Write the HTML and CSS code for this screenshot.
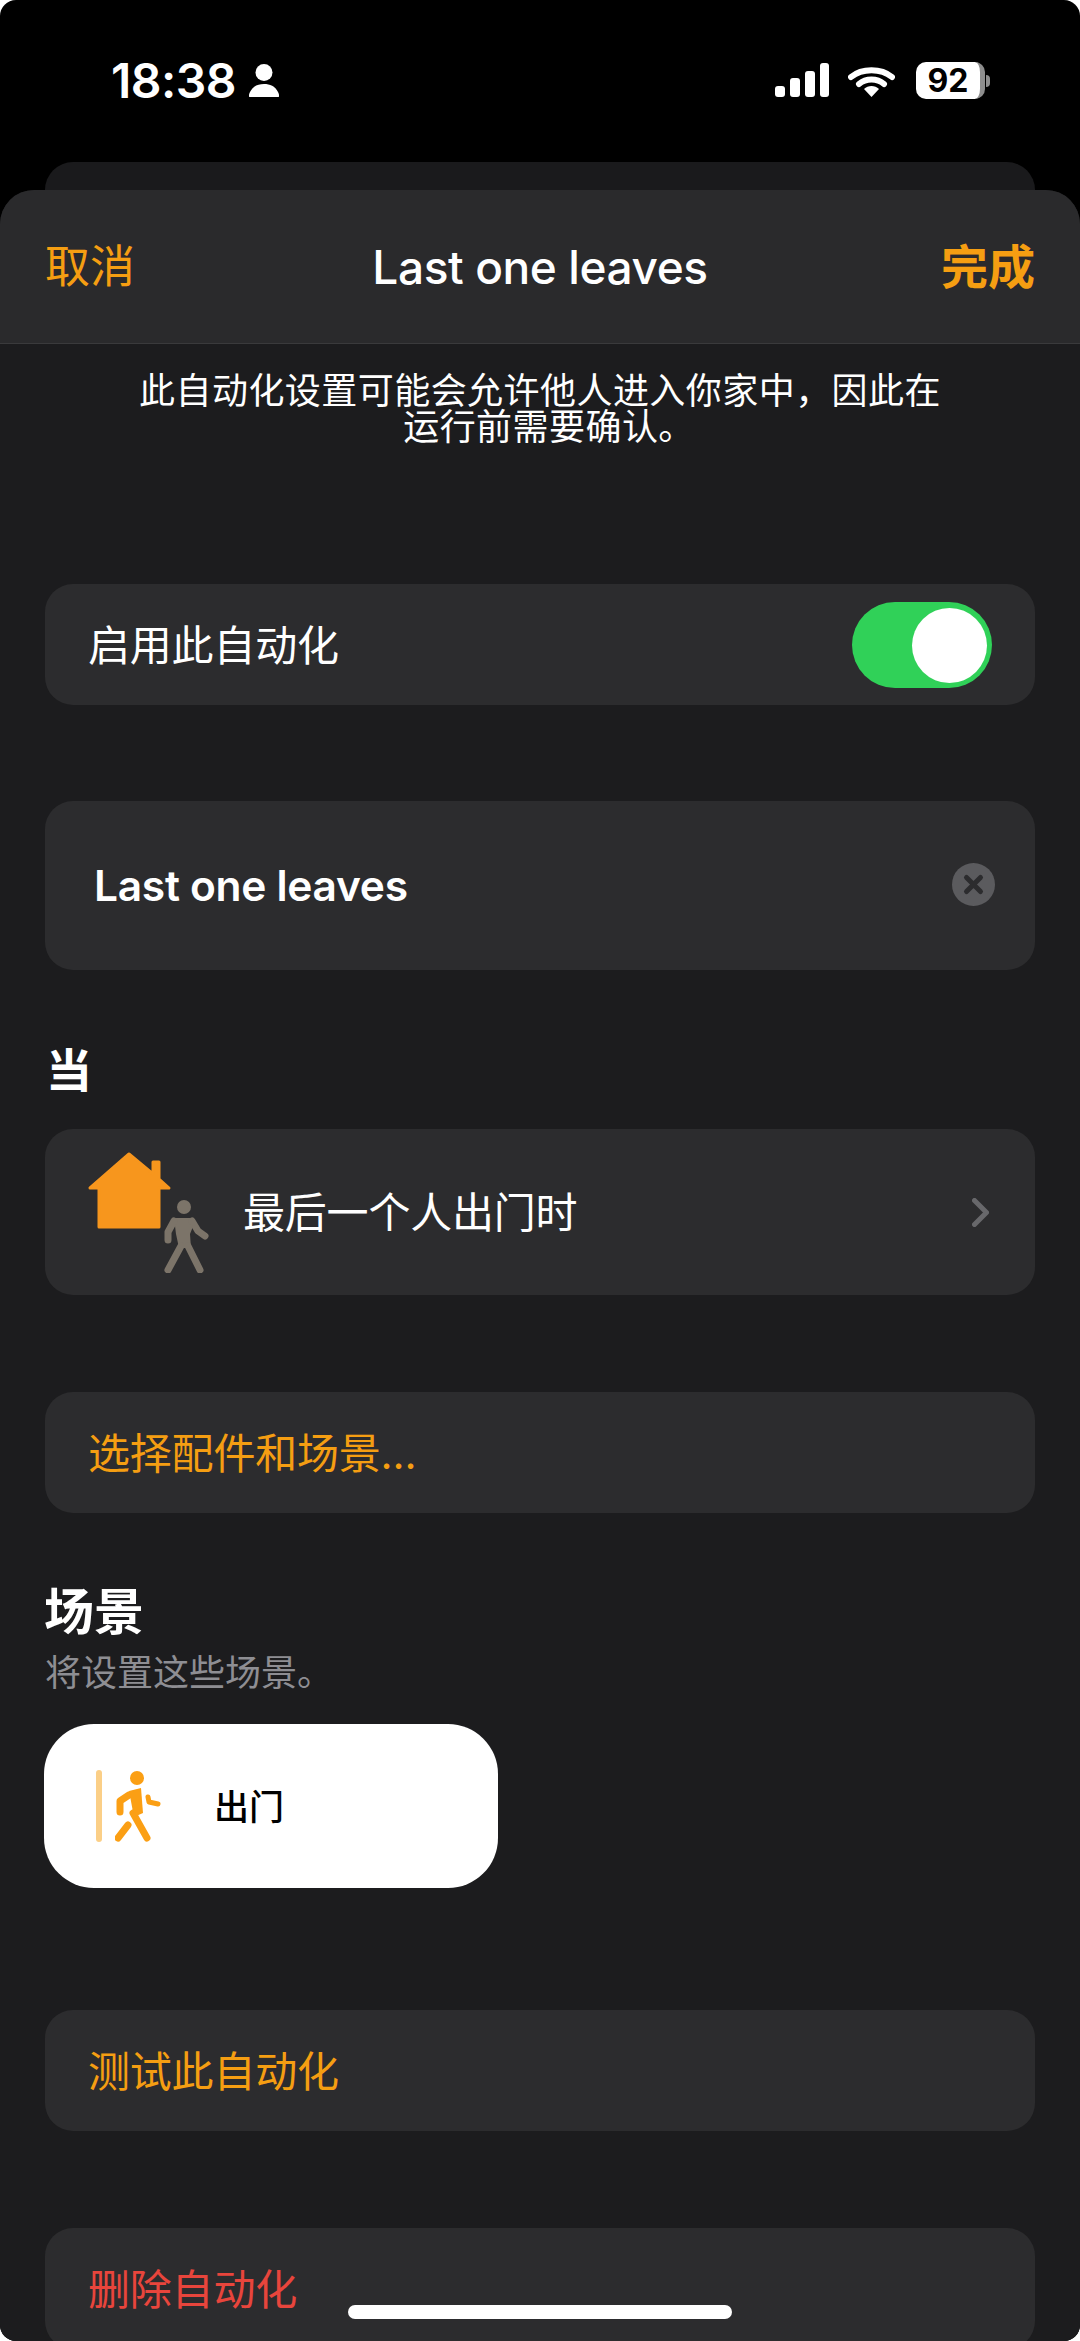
FILE: index.html
```html
<!DOCTYPE html>
<html lang="zh-CN">
<head>
    <meta charset="UTF-8" />
    <meta name="viewport" content="width=device-width, initial-scale=1.0" />
    <title>Last one leaves</title>
    <link rel="stylesheet" href="styles.css">
</head>
<body>
<div class="screen">

    <div class="status-bar">
        <div class="status-left">
            <span class="clock">18:38</span>
            <svg class="status-person" viewBox="0 0 30 33">
                <circle cx="15" cy="8.5" r="8.5" fill="#fff"/>
                <path d="M1 33 C-1 33 0 30 1 28 C4 22 9 20 15 20 C21 20 26 22 29 28 C30 30 31 33 29 33 Z" fill="#fff"/>
            </svg>
        </div>
        <div class="status-right">
            <svg class="signal" viewBox="0 0 54 34">
                <rect x="0" y="23" width="10" height="11" rx="3" fill="#fff"/>
                <rect x="15" y="15" width="10" height="19" rx="3" fill="#fff"/>
                <rect x="30" y="8" width="10" height="26" rx="3" fill="#fff"/>
                <rect x="45" y="0" width="9" height="34" rx="3" fill="#fff"/>
            </svg>
            <svg class="wifi" viewBox="0 0 47 30">
                <path d="M3 10 C14 1 33 1 44 10" fill="none" stroke="#fff" stroke-width="6" stroke-linecap="round"/>
                <path d="M11 17 C18 11 29 11 36 17" fill="none" stroke="#fff" stroke-width="6" stroke-linecap="round"/>
                <path d="M16 22 C20 18 27 18 31 22 L23.5 30 Z" fill="#fff"/>
            </svg>
            <div class="battery">
                <div class="battery-body">92</div>
                <div class="battery-nub"></div>
            </div>
        </div>
    </div>

    <div class="back-card"></div>

    <div class="sheet">
        <div class="sheet-nav">
            <span class="nav-btn">取消</span>
            <span class="nav-title">Last one leaves</span>
            <span class="nav-btn nav-done">完成</span>
        </div>

        <p class="notice">此自动化设置可能会允许他人进入你家中，因此在<br>运行前需要确认<span class="hang">。</span></p>

        <div class="row row-toggle">
            <span>启用此自动化</span>
            <div class="switch"><div class="switch-knob"></div></div>
        </div>

        <div class="row row-name">
            <span class="name-text">Last one leaves</span>
            <svg class="clear-btn" viewBox="0 0 43 43">
                <circle cx="21.5" cy="21.5" r="21.5" fill="#5b5b5e"/>
                <path d="M14.5 14.5 L28.5 28.5 M28.5 14.5 L14.5 28.5" stroke="#2c2c2e" stroke-width="5" stroke-linecap="round"/>
            </svg>
        </div>

        <h3 class="heading heading-when">当</h3>

        <div class="row row-trigger">
            <svg class="trigger-icon" viewBox="0 0 121 121">
                <path d="M41 2 L65 22 V10 H71 V27 L81 36 H71 V75 H11 V36 H2 Z" fill="#f7961d" stroke="#f7961d" stroke-width="3" stroke-linejoin="round"/>
                <g transform="translate(75 48)">
                    <circle cx="21" cy="7" r="7" fill="#7c7469"/>
                    <path d="M11 18 H27 L31 24 L27 34 L28 48 H16 L13 34 Z" fill="#7c7469"/>
                    <path d="M11 21 L5 32 L5 40 M29 21 L35 31 L42 36 M18 46 L5 70 M25 46 L37 70" fill="none" stroke="#7c7469" stroke-width="7" stroke-linecap="round" stroke-linejoin="round"/>
                </g>
            </svg>
            <span class="trigger-text">最后一个人出门时</span>
            <svg class="chevron" viewBox="0 0 17 29">
                <path d="M2.5 2.5 L14.5 14.5 L2.5 26.5" fill="none" stroke="#68686b" stroke-width="5" stroke-linecap="round" stroke-linejoin="round"/>
            </svg>
        </div>

        <div class="row row-accessories orange">选择配件和场景...</div>

        <h3 class="heading heading-scenes">场景</h3>
        <p class="subhead">将设置这些场景。</p>

        <div class="scene-card">
            <div class="scene-bar"></div>
            <svg class="scene-icon" viewBox="0 0 46 71">
                <circle cx="22" cy="7" r="7" fill="#fb9f14"/>
                <path d="M14 24 L5 30 L5 41 M13 54 L3 67 M18 42 L32 67" fill="none" stroke="#fb9f14" stroke-width="7" stroke-linecap="round" stroke-linejoin="round"/>
                <path d="M33 26 L34 31 L43 33" fill="none" stroke="#fb9f14" stroke-width="5" stroke-linecap="round" stroke-linejoin="round"/>
                <path d="M14 20 L26 17 L28 42 L19 46 Z" fill="#fb9f14"/>
            </svg>
            <span class="scene-name">出门</span>
        </div>

        <div class="row row-test orange">测试此自动化</div>
        <div class="row row-delete red">删除自动化</div>
    </div>

    <div class="home-bar"></div>
</div>
</body>
</html>
```

FILE: styles.css
```css
html, body { margin: 0; padding: 0; background: #fff; }
body { font-family: "Inter", "Noto Sans CJK SC", sans-serif; color: #fff; }
.screen {
    position: relative; width: 1080px; height: 2341px; overflow: hidden;
    background: #000; border-radius: 16px;
}

/* status bar */
.status-bar {
    height: 162px; box-sizing: border-box; padding: 62px 90px 0 111px;
    display: flex; justify-content: space-between; align-items: flex-start;
}
.status-left { display: flex; align-items: center; gap: 13px; height: 37px; }
.clock { font-size: 48px; font-weight: 600; line-height: 37px; letter-spacing: -0.5px; }
.status-person { width: 30px; height: 33px; }
.status-right { display: flex; align-items: flex-start; }
.signal { width: 54px; height: 34px; margin-top: 1px; }
.wifi { width: 47px; height: 30px; margin: 5px 21px 0 19px; }
.battery { display: flex; align-items: center; height: 37px; }
.battery-body {
    width: 69px; height: 37px; background: #fff; border-radius: 10px;
    border-right: 5px solid #8d8d8d; box-sizing: border-box;
    color: #000; font-size: 32px; font-weight: 700; line-height: 37px; text-align: center;
}
.battery-nub {
    width: 4px; height: 12px; margin-left: 1px; background: #8d8d8d;
    border-radius: 0 6px 6px 0;
}

.back-card {
    height: 28px; margin: 0 45px; background: #1a1a1c;
    border-radius: 30px 30px 0 0;
}

/* sheet */
.sheet {
    height: 2151px; background: #1c1c1e; border-radius: 34px 34px 0 0;
    overflow: hidden; display: flow-root;
}
.sheet-nav {
    height: 153px; background: #2a2a2c; border-bottom: 1px solid #3a3a3c;
    padding: 0 45px; display: flex; justify-content: space-between; align-items: center;
}
.nav-btn { font-size: 45px; color: #f59e12; line-height: 1; }
.nav-done { font-size: 47px; font-weight: 700; }
.nav-title { font-size: 46px; font-weight: 500; letter-spacing: -0.4px; margin-left: 4px; }
.notice {
    margin: 30px 0 0; text-align: center; font-size: 36px; line-height: 35.5px;
    letter-spacing: 0.45px; height: 210px;
}
.hang { margin-right: -18px; }

.row {
    margin: 0 45px; background: #2c2c2e; border-radius: 28px;
    box-sizing: border-box; height: 121px; padding: 0 43px;
    display: flex; align-items: center; justify-content: space-between;
    font-size: 42px; letter-spacing: -0.2px;
}
.orange { color: #f59e12; }
.red { color: #e8453c; }

.row-toggle span { margin-bottom: 4px; }
.switch {
    width: 140px; height: 86px; border-radius: 43px; background: #30d158;
    box-sizing: border-box; padding: 6px 5px 0 0;
    display: flex; justify-content: flex-end;
}
.switch-knob { width: 75px; height: 75px; border-radius: 50%; background: #fff; }

.row-name { margin-top: 96px; height: 169px; padding: 0 40px 0 49px; }
.name-text { font-size: 42.5px; font-weight: 600; letter-spacing: -0.3px; }
.clear-btn { width: 43px; height: 43px; margin-bottom: 2px; }

.heading { margin: 0 45px; font-weight: 700; line-height: 1; }
.heading-when { font-size: 46px; margin: 77px 46px 36px; height: 46px; line-height: 46px; }

.row-trigger { height: 166px; padding: 0 46px 0 43px; justify-content: flex-start; }
.trigger-icon { width: 121px; height: 121px; margin-right: 34px; }
.trigger-text { flex: 1; margin-bottom: 5px; }
.chevron { width: 17px; height: 29px; }

.row-accessories { margin-top: 97px; justify-content: flex-start; padding-bottom: 4px; }

.heading-scenes { font-size: 50px; margin: 75px 44px 0; height: 48px; line-height: 48px; }
.subhead { margin: 19px 45px 0; font-size: 36px; line-height: 36px; color: #8e8e93; }

.scene-card {
    margin: 33px 0 0 44px; width: 454px; height: 164px; box-sizing: border-box;
    background: #fff; border-radius: 50px; color: #000;
    display: flex; align-items: center; padding-left: 52px;
}
.scene-bar { width: 6px; height: 72px; border-radius: 3px; background: #fbcf87; }
.scene-icon { width: 46px; height: 71px; margin-left: 13px; }
.scene-name { margin: 0 0 4px 53px; font-size: 35px; font-weight: 500; }

.row-test { margin-top: 122px; justify-content: flex-start; padding-bottom: 5px; }
.row-delete { margin-top: 97px; justify-content: flex-start; padding-bottom: 5px; }

.home-bar {
    position: absolute; left: 348px; top: 2305px; width: 384px; height: 14px;
    background: #fff; border-radius: 7px;
}
```
